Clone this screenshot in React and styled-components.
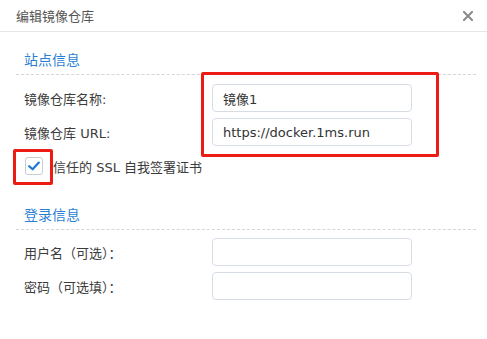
import React from 'react';
import styled, {createGlobalStyle} from 'styled-components';

const GlobalStyle = createGlobalStyle`
    html, body {
        margin: 0;
        padding: 0;
        background: #fff;
    }
    body {
        font-family: "DejaVu Sans", "Noto Sans CJK SC", sans-serif;
        font-size: 13px;
        color: #3a3a3a;
    }
`;

const Dialog = styled.div`
    position: relative;
    width: 487px;
    height: 339px;
    background: #fff;
    overflow: hidden;
`;

const Header = styled.div`
    display: flex;
    align-items: center;
    justify-content: space-between;
    height: 31px;
    padding: 0 14px 0 16px;
    border-bottom: 1px solid #e6e6e6;
`;

const Title = styled.div`
    font-size: 13px;
    color: #555;
`;

const Close = styled.div`
    display: flex;
    align-items: center;
    color: #8a8a8a;
    cursor: pointer;
`;

const Body = styled.div`
    padding: 0 11px 0 16px;
`;

const Section = styled.div`
    margin-top: ${props => props.gap}px;
`;

const SectionTitle = styled.div`
    height: 20px;
    line-height: 20px;
    padding: 0 0 4px 8px;
    font-size: 14px;
    color: #2a7fd4;
    border-bottom: 1px dashed #d6d6d6;
`;

const Form = styled.div`
    display: grid;
    grid-template-columns: 196px 200px;
    row-gap: 6px;
    margin-top: ${props => props.gap}px;
`;

const Label = styled.div`
    display: flex;
    align-items: center;
    padding-left: 8px;
    height: 28px;
    color: #3c3c3c;
`;

const Input = styled.div`
    display: flex;
    align-items: center;
    box-sizing: border-box;
    height: 28px;
    padding: 0 10px;
    border: 1px solid #d7dde5;
    border-radius: 4px;
    color: #333;
`;

const CheckRow = styled.div`
    display: flex;
    align-items: center;
    gap: 10px;
    height: 18px;
    margin-top: 11px;
    padding-left: 9px;
    color: #3c3c3c;
`;

const Box = styled.div`
    display: flex;
    align-items: center;
    justify-content: center;
    box-sizing: border-box;
    width: 18px;
    height: 18px;
    border: 1px solid #c8ccd1;
    border-radius: 3px;
    background: #fff;
`;

const Mark = styled.div`
    position: absolute;
    left: ${props => props.x}px;
    top: ${props => props.y}px;
    width: ${props => props.w}px;
    height: ${props => props.h}px;
    box-sizing: border-box;
    border: 3px solid #ec1c14;
    border-radius: 2px;
    pointer-events: none;
`;

const CloseIcon = () => (
    <svg width="10" height="10" viewBox="0 0 10 10">
        <path d="M1 1 L9 9 M9 1 L1 9" stroke="currentColor" strokeWidth="2" strokeLinecap="square"/>
    </svg>
);

const CheckIcon = () => (
    <svg width="12" height="10" viewBox="0 0 12 10">
        <path d="M1.2 5.2 L4.6 8.3 L10.8 1.6" fill="none" stroke="#1f78d1" strokeWidth="2.2"
              strokeLinecap="round" strokeLinejoin="round"/>
    </svg>
);

const App = () => (
    <Dialog>
        <GlobalStyle/>
        <Header>
            <Title>编辑镜像仓库</Title>
            <Close><CloseIcon/></Close>
        </Header>
        <Body>
            <Section gap={18}>
                <SectionTitle>站点信息</SectionTitle>
                <Form gap={9}>
                    <Label>镜像仓库名称:</Label>
                    <Input>镜像1</Input>
                    <Label>镜像仓库 URL:</Label>
                    <Input>https://docker.1ms.run</Input>
                </Form>
                <CheckRow>
                    <Box><CheckIcon/></Box>
                    信任的 SSL 自我签署证书
                </CheckRow>
            </Section>
            <Section gap={30}>
                <SectionTitle>登录信息</SectionTitle>
                <Form gap={8}>
                    <Label>用户名（可选）：</Label>
                    <Input/>
                    <Label>密码（可选填）：</Label>
                    <Input/>
                </Form>
            </Section>
        </Body>
        <Mark x={201} y={72} w={238} h={85}/>
        <Mark x={13} y={149} w={40} h={36}/>
    </Dialog>
);

export default App;
